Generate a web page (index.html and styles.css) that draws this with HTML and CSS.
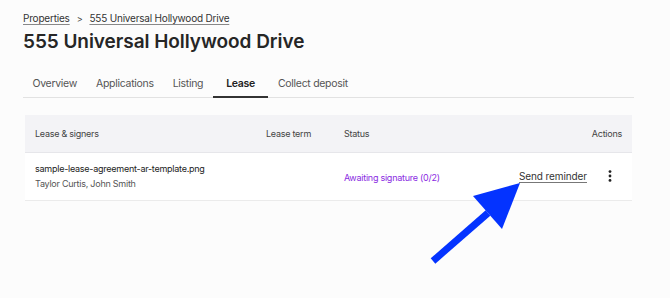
FILE: index.html
```html
<!DOCTYPE html>
<html lang="en">
<head>
  <meta charset="UTF-8" />
  <meta name="viewport" content="width=device-width, initial-scale=1.0" />
  <title>555 Universal Hollywood Drive - Lease</title>
  <link rel="stylesheet" href="styles.css">
</head>
<body>
  <main class="page">
    <nav class="breadcrumb">
      <a href="#">Properties</a>
      <span class="sep">&gt;</span>
      <a href="#">555 Universal Hollywood Drive</a>
    </nav>
    <h1>555 Universal Hollywood Drive</h1>

    <div class="tabs">
      <a href="#" class="tab">Overview</a>
      <a href="#" class="tab">Applications</a>
      <a href="#" class="tab">Listing</a>
      <a href="#" class="tab active">Lease</a>
      <a href="#" class="tab">Collect deposit</a>
    </div>

    <section class="table">
      <div class="row head">
        <div>Lease &amp; signers</div>
        <div>Lease term</div>
        <div>Status</div>
        <div class="right">Actions</div>
      </div>
      <div class="row">
        <div>
          <div class="file">sample-lease-agreement-ar-template.png</div>
          <div class="signers">Taylor Curtis, John Smith</div>
        </div>
        <div></div>
        <div class="status">Awaiting signature (0/2)</div>
        <div class="actions">
          <a href="#" class="reminder">Send reminder</a>
          <span class="kebab">
            <svg width="4" height="12" viewBox="0 0 4 12"><circle cx="2" cy="1.6" r="1.4"/><circle cx="2" cy="6" r="1.4"/><circle cx="2" cy="10.4" r="1.4"/></svg>
          </span>
        </div>
      </div>
    </section>
  </main>

  <svg class="arrow" width="670" height="298" viewBox="0 0 670 298">
    <line x1="433" y1="261" x2="488" y2="213" stroke="#0433ff" stroke-width="7"/>
    <polygon points="520,183 473,196 502,229" fill="#0433ff"/>
  </svg>
</body>
</html>
```

FILE: styles.css
```css
* {
  box-sizing: border-box;
  margin: 0;
  padding: 0;
}

body {
  font-family: Inter, 'Noto Sans', sans-serif;
  background-color: #fcfcfc;
  color: #222;
  width: 670px;
  height: 298px;
  overflow: hidden;
}

a {
  color: inherit;
}

.page {
  padding: 11px 36px 0 23px;
}

.breadcrumb {
  display: flex;
  align-items: center;
  gap: 7px;
  font-size: 10px;
  letter-spacing: -0.2px;
  color: #333;
  height: 14px;
}

.breadcrumb a {
  text-decoration: underline;
  text-decoration-color: #888;
  text-underline-offset: 2px;
}

.breadcrumb .sep {
  font-size: 9px;
  color: #444;
}

h1 {
  font-size: 19px;
  font-weight: 600;
  color: #262626;
  margin-top: 4px;
  line-height: 26px;
  letter-spacing: -0.05px;
}

.tabs {
  display: flex;
  margin-top: 18px;
  border-bottom: 1.5px solid #e2e2e2;
}

.tab {
  text-decoration: none;
  font-size: 10.5px;
  letter-spacing: -0.3px;
  color: #555;
  padding: 4px 9.5px 6px;
  border-bottom: 2px solid transparent;
  margin-bottom: -1.5px;
}

.tab.active {
  color: #222;
  font-weight: 600;
  border-bottom-color: #333;
  padding: 4px 13.5px 6px;
}

.table {
  margin: 17px 2px 0 2px;
  background: white;
  font-size: 9px;
  letter-spacing: -0.25px;
}

.row {
  display: grid;
  grid-template-columns: 231px 78px 1fr auto;
  align-items: center;
  padding: 0 10px;
  border-bottom: 1px solid #ebebeb;
  height: 48px;
}

.row.head {
  background: #f3f3f6;
  color: #444;
  height: 38px;
  border-bottom: 1px solid #e6e6ea;
}

.right {
  text-align: right;
}

.file {
  color: #222;
}

.signers {
  color: #555;
  margin-top: 4px;
}

.status {
  color: #8a2be2;
  padding-top: 2px;
}

.actions {
  display: flex;
  align-items: center;
}

.reminder {
  font-size: 10px;
  letter-spacing: -0.1px;
  color: #333;
  text-decoration: underline;
  text-decoration-color: #777;
  text-underline-offset: 2px;
}

.kebab {
  display: flex;
  margin: 0 10px 0 21px;
  fill: #222;
}

.arrow {
  position: absolute;
  left: 0;
  top: 0;
}
```
